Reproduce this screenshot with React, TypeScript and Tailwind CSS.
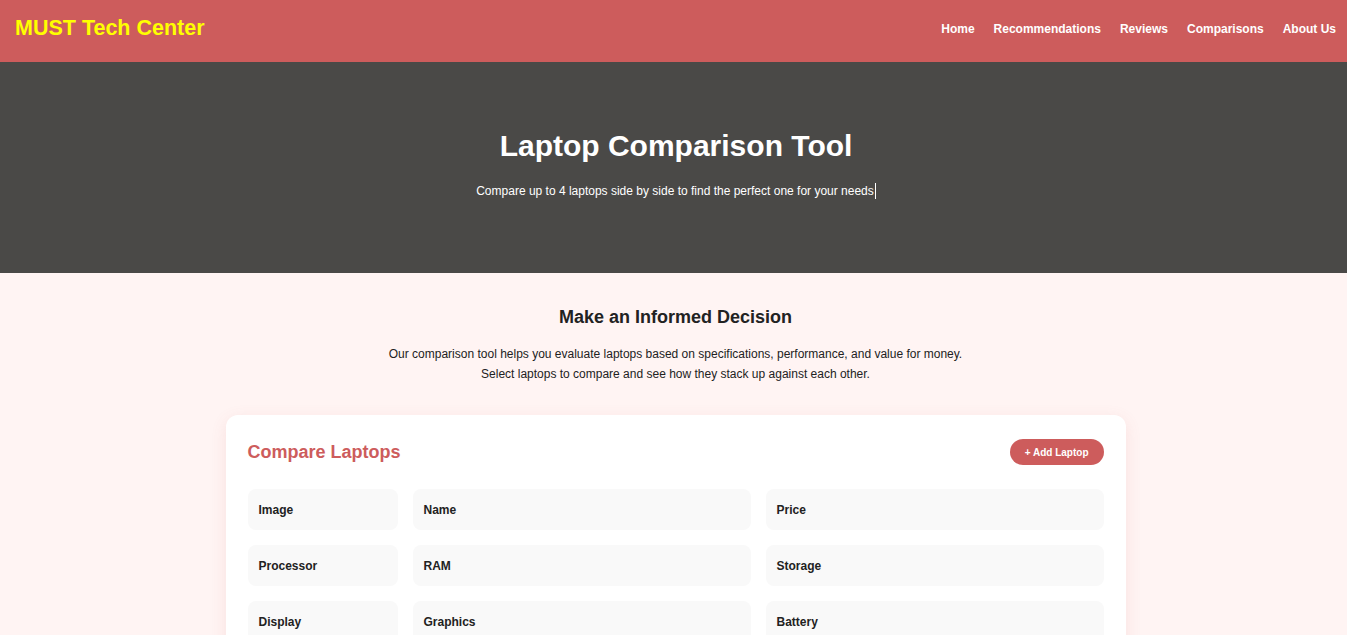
export default function App() {
  const cells = [
    ["Image", "Name", "Price"],
    ["Processor", "RAM", "Storage"],
    ["Display", "Graphics", "Battery"],
    ["Weight", "Rating", "Action"],
  ];

  return (
    <div className="min-h-screen bg-[#fff4f3] font-['Liberation_Sans',Arial,sans-serif] text-[#222]">
      <header className="flex h-[62px] items-center justify-between bg-[#cd5c5c] pb-[5px] pl-[15px] pr-[11px] shadow-md">
        <h1 className="text-[21.5px] font-bold text-[#ffff00]">MUST Tech Center</h1>
        <nav className="flex items-center gap-[19px] text-[12px] font-bold text-white">
          <a href="#">Home</a>
          <a href="#">Recommendations</a>
          <a href="#">Reviews</a>
          <a href="#">Comparisons</a>
          <a href="#">About Us</a>
        </nav>
      </header>

      <section className="flex h-[211px] flex-col items-center bg-[#4a4947] pl-[5px] pt-[64px] text-white">
        <h2 className="text-[30px] font-bold leading-[40px]">Laptop Comparison Tool</h2>
        <p className="mt-[17px] border-r border-white pr-px text-[12px] leading-[16px]">
          Compare up to 4 laptops side by side to find the perfect one for your needs
        </p>
      </section>

      <main className="flex flex-col items-center pt-8 pb-10 pl-[4px]">
        <h3 className="text-[18px] font-bold leading-6">Make an Informed Decision</h3>
        <p className="mt-[15px] text-center text-[12px] leading-5">
          Our comparison tool helps you evaluate laptops based on specifications, performance, and value for money.
          <br />
          Select laptops to compare and see how they stack up against each other.
        </p>

        <div className="mt-[31px] w-[900px] rounded-xl bg-white px-[22px] pt-6 pb-6 shadow-[0_4px_16px_rgba(205,92,92,0.12)]">
          <div className="flex h-[26px] items-center justify-between">
            <h4 className="text-[18px] font-bold text-[#cd5c5c]">Compare Laptops</h4>
            <button className="h-[26px] rounded-full bg-[#cd5c5c] px-[15px] text-[10px] font-bold text-white">
              + Add Laptop
            </button>
          </div>
          <div className="mt-6 grid grid-cols-[150px_1fr_1fr] gap-[15px]">
            {cells.flat().map((c) => (
              <div key={c} className="flex h-[41px] items-center rounded-lg bg-[#f9f9f9] pl-[11px] text-[12px] font-bold">
                {c}
              </div>
            ))}
          </div>
        </div>
      </main>
    </div>
  );
}
